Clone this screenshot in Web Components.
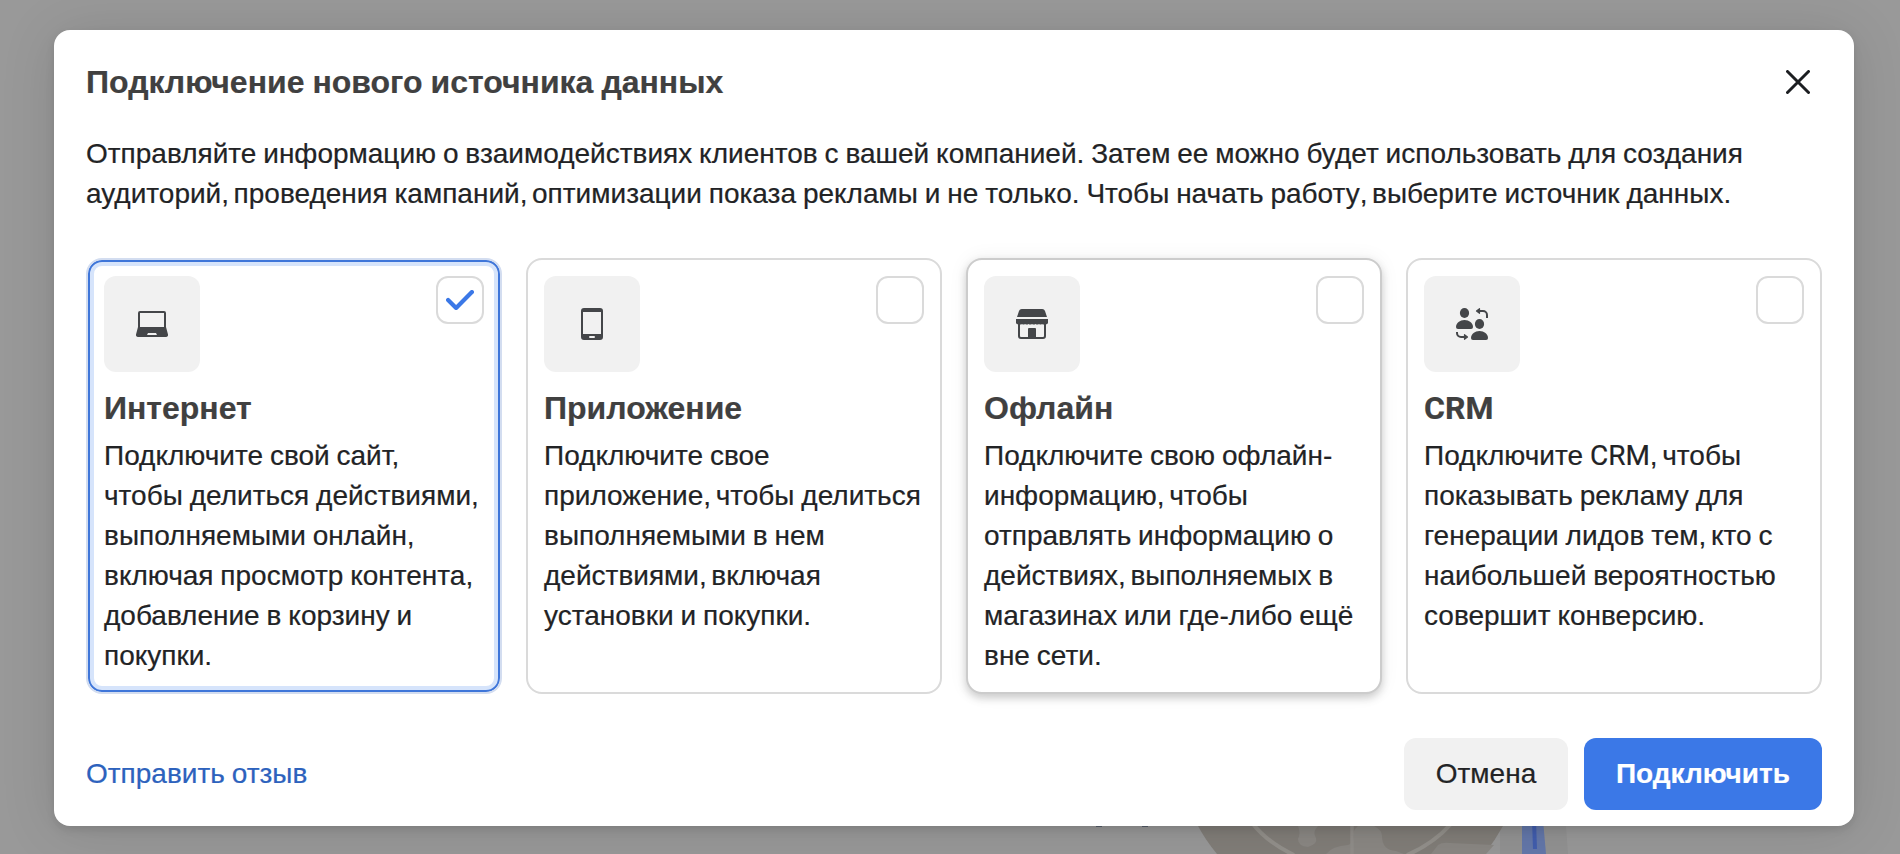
<!DOCTYPE html>
<html lang="ru">
<head>
<meta charset="utf-8">
<title>Подключение нового источника данных</title>
<style>
  body {
    margin: 0;
    height: 854px;
    overflow: hidden;
    background: #999;
    font-family: "Liberation Sans", Arial, sans-serif;
    font-size: 28px;
    line-height: 40px;
    word-spacing: -.9px;
    color: #222325;
    -webkit-text-stroke: .2px;
  }
  /* narrower commas */
  .c { letter-spacing: -2.300px; }
  .latin { font-family: Roboto, sans-serif; }
</style>
</head>
<body>
<modal-page>
  <page-backdrop slot="backdrop"></page-backdrop>
  <source-dialog>
    <span slot="title">Подключение нового источника данных</span>
    <span slot="intro">Отправляйте информацию о взаимодействиях клиентов с вашей компанией. Затем ее можно будет использовать для создания<br>аудиторий<span class="c">,</span> проведения кампаний<span class="c">,</span> оптимизации показа рекламы и не только. Чтобы начать работу<span class="c">,</span> выберите источник данных.</span>
    <source-card icon="laptop" selected>
      <span slot="title">Интернет</span>
      Подключите свой сайт,<br>чтобы делиться действиями,<br>выполняемыми онлайн,<br>включая просмотр контента,<br>добавление в корзину и<br>покупки.
    </source-card>
    <source-card icon="phone">
      <span slot="title">Приложение</span>
      Подключите свое<br>приложение<span class="c">,</span> чтобы делиться<br>выполняемыми в нем<br>действиями<span class="c">,</span> включая<br>установки и покупки.
    </source-card>
    <source-card icon="store" raised>
      <span slot="title">Офлайн</span>
      Подключите свою офлайн-<br>информацию<span class="c">,</span> чтобы<br>отправлять информацию о<br>действиях<span class="c">,</span> выполняемых в<br>магазинах или где-либо ещё<br>вне сети.
    </source-card>
    <source-card icon="crm">
      <span slot="title" class="latin">CRM</span>
      Подключите <span class="latin">CRM</span><span class="c">,</span> чтобы<br>показывать рекламу для<br>генерации лидов тем<span class="c">,</span> кто с<br>наибольшей вероятностью<br>совершит конверсию.
    </source-card>
    <text-link slot="footer">Отправить отзыв</text-link>
    <dialog-button slot="actions">Отмена</dialog-button>
    <dialog-button slot="actions" primary>Подключить</dialog-button>
  </source-dialog>
</modal-page>

<script>
const icons = {
  laptop: `
    <path fill-rule="evenodd" d="M4 3h24a2 2 0 0 1 2 2v14l2 7.500a2 2 0 0 1-2 2.500H2a2 2 0 0 1-2-2.500L2 19V5a2 2 0 0 1 2-2zm0 2v14h24V5zM12 25l-1 2h10l-1-2z"/>`,
  phone: `
    <path fill-rule="evenodd" d="M8 0h16a3 3 0 0 1 3 3v26a3 3 0 0 1-3 3H8a3 3 0 0 1-3-3V3a3 3 0 0 1 3-3zM7 4v22h18V4zM14 28a1 1 0 0 0 0 2h4a1 1 0 0 0 0-2z"/>`,
  store: `
    <path d="M6 1h20a3 3 0 0 1 3 2l2 6H1l2-6a3 3 0 0 1 3-2z"/>
    <path d="M0 11h32v3a2 2 0 0 1-3 2q-1.500 1-3 0-1.500 1-3 0-1.700 1-3.500 0-1.700 1-3.500 0-1.700 1-3.500 0-1.500 1-3.500 0-1.500 1-3 0-1.500 1-3 0Q5 17 3 16a2 2 0 0 1-3-2z"/>
    <path d="M3 15v13a2 2 0 0 0 2 2h22a2 2 0 0 0 2-2V15" fill="none" stroke="currentColor" stroke-width="2"/>
    <path d="M12 31V21a1 1 0 0 1 1-1h6a1 1 0 0 1 1 1v10z"/>`,
  crm: `
    <ellipse cx="8.500" cy="5" rx="4.600" ry="5"/>
    <path d="M2 21a2 2 0 0 1-2-2c0-4 4-7 8.500-7s8.500 3 8.500 7a2 2 0 0 1-2 2z"/>
    <ellipse cx="23.500" cy="16" rx="4.600" ry="5"/>
    <path d="M17 32a2 2 0 0 1-2-2c0-4 4-7 8.500-7s8.500 3 8.500 7a2 2 0 0 1-2 2z"/>
    <path d="M22 3h5a4 4 0 0 1 4 4v3M10 29H5a4 4 0 0 1-4-4v-1" fill="none" stroke="currentColor" stroke-width="2"/>
    <path d="M20.500 3 23.500 .700v4.600zM11.500 29l-3-2.300v4.600z" stroke="currentColor" stroke-width="1.200" stroke-linejoin="round"/>`
};

const modalPageTemplate = document.createElement( "template" );
modalPageTemplate.innerHTML = `
  <style>
    :host {
      display: flex;
      position: relative;
      box-sizing: border-box;
      height: 854px;
      padding: 30px 46px 28px 54px;
      overflow: hidden;
    }
  </style>
  <slot name="backdrop"></slot>
  <slot></slot>
`;

class ModalPage extends HTMLElement {
  constructor() {
    super();
    this.attachShadow( {mode:"open"} );
    this.shadowRoot.appendChild( modalPageTemplate.content.cloneNode(true) );
  }
};

// dimmed illustration of the page below the dialog
const pageBackdropTemplate = document.createElement( "template" );
pageBackdropTemplate.innerHTML = `
  <style>
    :host {
      position: absolute;
      inset: 0;
    }
    svg { display: block; }
  </style>
  <svg width="1900" height="854" viewBox="0 0 1900 854">
    <path d="M1500 800h58l8 26 2 28h-68z" fill="#939393"/>
    <circle cx="1350.500" cy="743" r="173.600" fill="#827e79"/>
    <path d="M1298 826h20q-6 6-2 12 2 6-8 9-10-1-10-8 3-6 0-13zM1358 826h16q8 4 8 10 0 14 14 15l8 3h-78q6-8 22-9 6-2 6-9-2-5 4-10zM1431 854l7-9q4-3 12-2l44 2-8 9z" fill="#8b8884"/>
    <path d="M1253 824q14 18 41 31M1451 824q-18 20-44 31" fill="none" stroke="#94918c" stroke-width="4"/>
    <path d="M1352 826v28" stroke="#918e8a" stroke-width="3.500"/>
    <path d="M1522 820h21l3 34h-24z" fill="#6478ab"/>
    <path d="M1532 820h4l1 29h-4z" fill="#425eaf"/>
    <path d="M1096 824h6v3h-6zM1142 824h6v3h-6z" fill="#565d69"/>
  </svg>
`;

class PageBackdrop extends HTMLElement {
  constructor() {
    super();
    this.attachShadow( {mode:"open"} );
    this.shadowRoot.appendChild( pageBackdropTemplate.content.cloneNode(true) );
  }
};

const sourceDialogTemplate = document.createElement( "template" );
sourceDialogTemplate.innerHTML = `
  <style>
    :host {
      display: flex;
      flex-direction: column;
      flex: 1;
      position: relative;
      box-sizing: border-box;
      padding: 32px 32px 16px;
      border-radius: 16px;
      background: #fff;
      box-shadow: 0 4px 8px rgba(0, 0, 0, .1), 0 4px 56px rgba(0, 0, 0, .12);
    }
    header {
      display: flex;
      justify-content: space-between;
      align-items: center;
      height: 40px;
    }
    h1 {
      margin: 0;
      font-size: 32px;
      line-height: 40px;
      color: #404040;
      white-space: nowrap;
    }
    button {
      display: flex;
      padding: 0;
      margin-right: 12px;
      border: none;
      background: none;
      color: #1c1e21;
    }
    p {
      margin: 32px 0 44px;
      white-space: nowrap;
    }
    .cards {
      display: grid;
      grid-template-columns: repeat(4, 416px);
      gap: 24px;
      height: 436px;
    }
    footer {
      display: flex;
      justify-content: space-between;
      align-items: center;
      margin-top: auto;
      height: 72px;
    }
    .actions {
      display: flex;
      gap: 16px;
    }
  </style>
  <header>
    <h1><slot name="title"></slot></h1>
    <button aria-label="Закрыть">
      <svg width="24" height="24" viewBox="0 0 24 24" fill="none" stroke="currentColor" stroke-width="3" stroke-linecap="round"><path d="M1.500 1.500l21 21M22.500 1.500l-21 21"/></svg>
    </button>
  </header>
  <p><slot name="intro"></slot></p>
  <div class="cards"><slot></slot></div>
  <footer>
    <slot name="footer"></slot>
    <div class="actions"><slot name="actions"></slot></div>
  </footer>
`;

class SourceDialog extends HTMLElement {
  constructor() {
    super();
    this.attachShadow( {mode:"open"} );
    this.shadowRoot.appendChild( sourceDialogTemplate.content.cloneNode(true) );
  }
};

const sourceCardTemplate = document.createElement( "template" );
sourceCardTemplate.innerHTML = `
  <style>
    :host {
      display: block;
      box-sizing: border-box;
      padding: 16px;
      border: 2px solid #dadada;
      border-radius: 16px;
      background: #fff;
    }
    :host([raised]) {
      border-color: #ccc;
      box-shadow: 0 4px 8px rgba(0, 0, 0, .18), 0 0 20px rgba(0, 0, 0, .06);
    }
    :host([selected]) {
      border-color: #d3ddf0;
      box-shadow: inset 0 0 0 2px #3f76d9, inset 0 0 0 6px #d6e4fb;
    }
    .top {
      display: flex;
      justify-content: space-between;
      align-items: flex-start;
    }
    .icon {
      display: flex;
      align-items: center;
      justify-content: center;
      width: 96px;
      height: 96px;
      border-radius: 12px;
      background: #f1f1f1;
      color: #444649;
    }
    .check {
      display: flex;
      align-items: center;
      justify-content: center;
      box-sizing: border-box;
      width: 48px;
      height: 48px;
      border: 2px solid #dadada;
      border-radius: 12px;
      background: #fff;
    }
    .check svg { display: none; }
    :host([selected]) .check svg { display: block; }
    h2 {
      margin: 16px 0 8px;
      font-size: 32px;
      line-height: 40px;
      color: #404040;
    }
    .text { white-space: nowrap; }
  </style>
  <div class="top">
    <div class="icon"><svg width="32" height="32" viewBox="0 0 32 32" fill="currentColor"></svg></div>
    <div class="check"><svg width="28" height="20" viewBox="0 0 28 20" fill="none" stroke="#3b78e7" stroke-width="4.200" stroke-linecap="round" stroke-linejoin="round"><path d="M2.100 9.900l8 8L25.900 2.100"/></svg></div>
  </div>
  <h2><slot name="title"></slot></h2>
  <div class="text"><slot></slot></div>
`;

class SourceCard extends HTMLElement {
  constructor() {
    super();
    this.attachShadow( {mode:"open"} );
    this.shadowRoot.appendChild( sourceCardTemplate.content.cloneNode(true) );
  }

  connectedCallback() {
    this.shadowRoot.querySelector( ".icon svg" ).innerHTML = icons[ this.getAttribute("icon") ];
  }
};

const textLinkTemplate = document.createElement( "template" );
textLinkTemplate.innerHTML = `
  <style>
    :host {
      display: block;
      color: #2d62bd;
    }
  </style>
  <slot></slot>
`;

class TextLink extends HTMLElement {
  constructor() {
    super();
    this.attachShadow( {mode:"open"} );
    this.shadowRoot.appendChild( textLinkTemplate.content.cloneNode(true) );
  }
};

const dialogButtonTemplate = document.createElement( "template" );
dialogButtonTemplate.innerHTML = `
  <style>
    :host {
      display: flex;
      align-items: center;
      justify-content: center;
      box-sizing: border-box;
      width: 164px;
      height: 72px;
      border-radius: 12px;
      background: #f1f1f1;
    }
    :host([primary]) {
      width: 238px;
      background: #3b78e7;
      color: #fff;
      font-weight: bold;
    }
  </style>
  <slot></slot>
`;

class DialogButton extends HTMLElement {
  constructor() {
    super();
    this.attachShadow( {mode:"open"} );
    this.shadowRoot.appendChild( dialogButtonTemplate.content.cloneNode(true) );
  }
};

window.customElements.define( "modal-page", ModalPage );
window.customElements.define( "page-backdrop", PageBackdrop );
window.customElements.define( "source-dialog", SourceDialog );
window.customElements.define( "source-card", SourceCard );
window.customElements.define( "text-link", TextLink );
window.customElements.define( "dialog-button", DialogButton );
</script>
</body>
</html>
